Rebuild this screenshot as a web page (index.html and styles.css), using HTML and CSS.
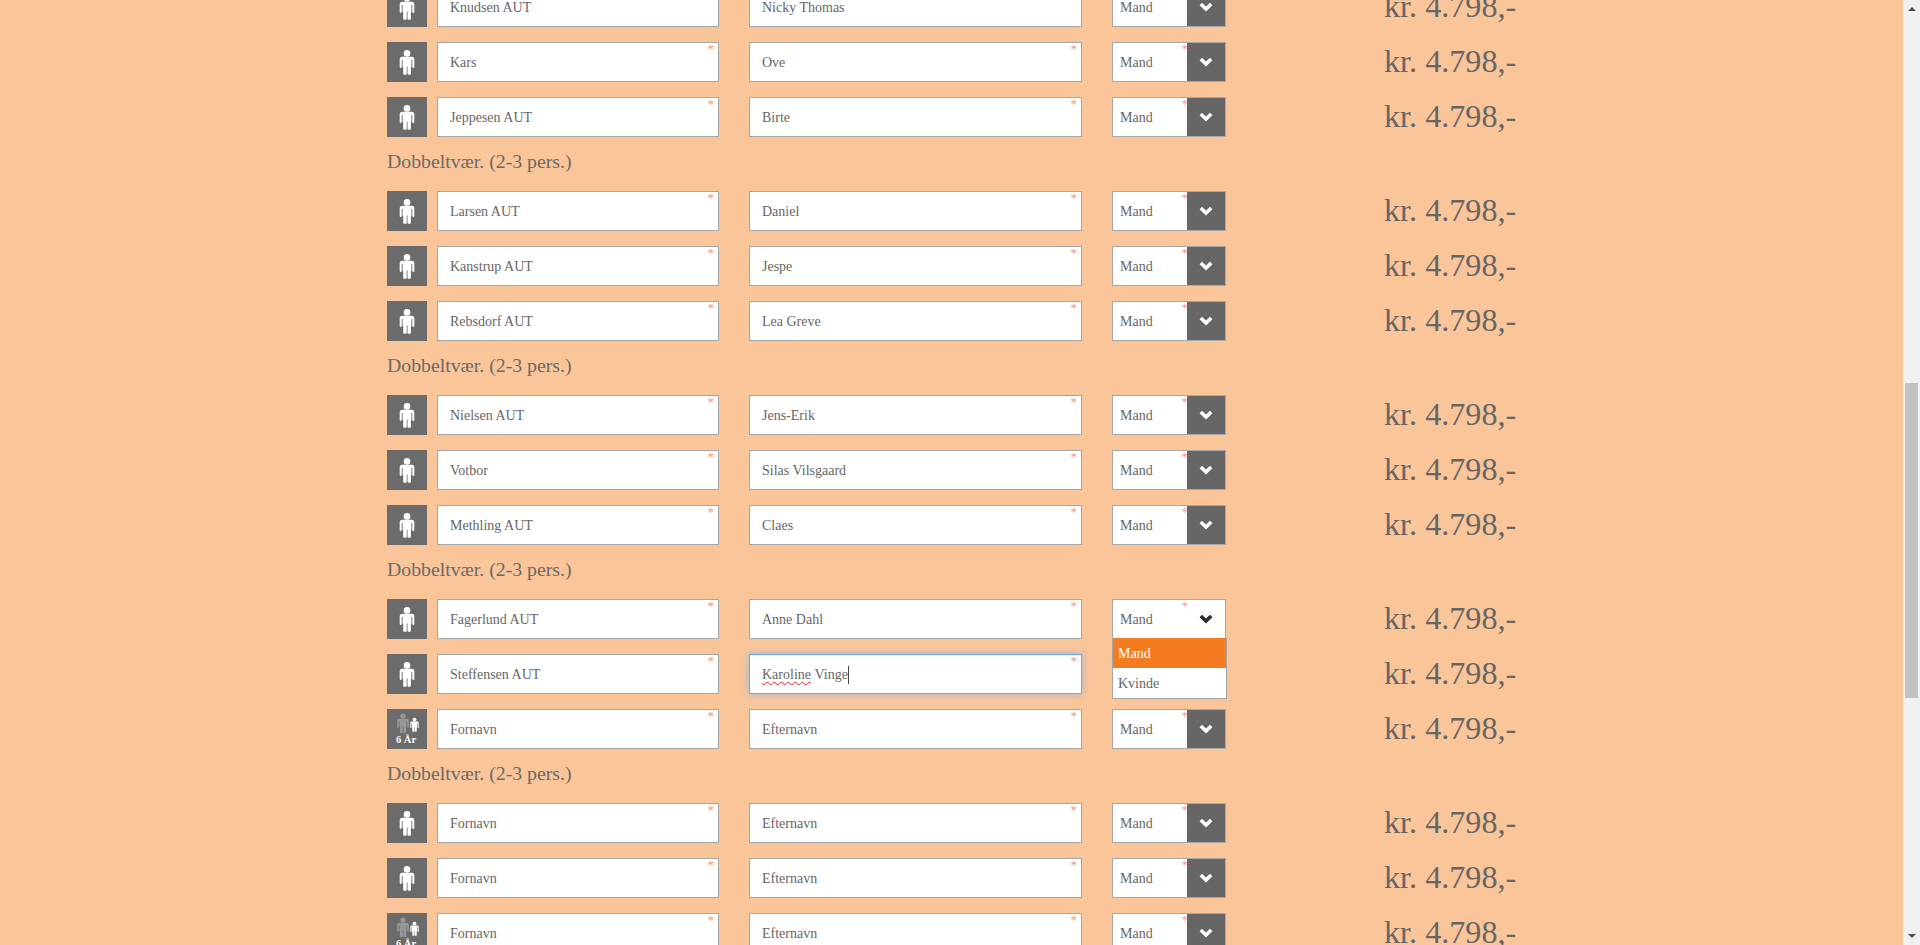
FILE: index.html
```html
<!DOCTYPE html>
<html lang="da">
<head>
<meta charset="utf-8">
<title>Dobbeltvær</title>
<link rel="stylesheet" href="styles.css">
</head>
<body>
<svg class="defs" width="0" height="0" aria-hidden="true">
  <symbol id="person" viewBox="0 0 40 40">
    <circle cx="20" cy="11.4" r="3.3"/>
    <path d="M15.2 14.7h9.6a2.5 2.5 0 0 1 2.5 2.5V25a1 1 0 0 1-2 0v-7h-.9V25h-.5v6.7a1 1 0 0 1-1 1h-1.4a1 1 0 0 1-1-1V24.5h-.8v7.2a1 1 0 0 1-1 1H17.2a1 1 0 0 1-1-1V25h-.6v-7h-.9v7a1 1 0 0 1-2 0v-7.8a2.5 2.5 0 0 1 2.5-2.5z"/>
  </symbol>
  <symbol id="chev" viewBox="0 0 14 10">
    <path d="M1.8 2l5.2 5 5.2-5" fill="none" stroke="currentColor" stroke-width="3.6"/>
  </symbol>
</svg>
<div class="shell">
<main class="page">
  <div class="list">

    <div class="row"><div class="badge"><svg class="ico"><use href="#person"/></svg></div><div class="field f1">Knudsen AUT<i>*</i></div><div class="field f2">Nicky Thomas<i>*</i></div><div class="sel">Mand<i>*</i><b><svg class="chev"><use href="#chev"/></svg></b></div><div class="price">kr. 4.798,-</div></div>
    <div class="row"><div class="badge"><svg class="ico"><use href="#person"/></svg></div><div class="field f1">Kars<i>*</i></div><div class="field f2">Ove<i>*</i></div><div class="sel">Mand<i>*</i><b><svg class="chev"><use href="#chev"/></svg></b></div><div class="price">kr. 4.798,-</div></div>
    <div class="row"><div class="badge"><svg class="ico"><use href="#person"/></svg></div><div class="field f1">Jeppesen AUT<i>*</i></div><div class="field f2">Birte<i>*</i></div><div class="sel">Mand<i>*</i><b><svg class="chev"><use href="#chev"/></svg></b></div><div class="price">kr. 4.798,-</div></div>

    <h3 class="room">Dobbeltvær. (2-3 pers.)</h3>
    <div class="row"><div class="badge"><svg class="ico"><use href="#person"/></svg></div><div class="field f1">Larsen AUT<i>*</i></div><div class="field f2">Daniel<i>*</i></div><div class="sel">Mand<i>*</i><b><svg class="chev"><use href="#chev"/></svg></b></div><div class="price">kr. 4.798,-</div></div>
    <div class="row"><div class="badge"><svg class="ico"><use href="#person"/></svg></div><div class="field f1">Kanstrup AUT<i>*</i></div><div class="field f2">Jespe<i>*</i></div><div class="sel">Mand<i>*</i><b><svg class="chev"><use href="#chev"/></svg></b></div><div class="price">kr. 4.798,-</div></div>
    <div class="row"><div class="badge"><svg class="ico"><use href="#person"/></svg></div><div class="field f1">Rebsdorf AUT<i>*</i></div><div class="field f2">Lea Greve<i>*</i></div><div class="sel">Mand<i>*</i><b><svg class="chev"><use href="#chev"/></svg></b></div><div class="price">kr. 4.798,-</div></div>

    <h3 class="room">Dobbeltvær. (2-3 pers.)</h3>
    <div class="row"><div class="badge"><svg class="ico"><use href="#person"/></svg></div><div class="field f1">Nielsen AUT<i>*</i></div><div class="field f2">Jens-Erik<i>*</i></div><div class="sel">Mand<i>*</i><b><svg class="chev"><use href="#chev"/></svg></b></div><div class="price">kr. 4.798,-</div></div>
    <div class="row"><div class="badge"><svg class="ico"><use href="#person"/></svg></div><div class="field f1">Votbor<i>*</i></div><div class="field f2">Silas Vilsgaard<i>*</i></div><div class="sel">Mand<i>*</i><b><svg class="chev"><use href="#chev"/></svg></b></div><div class="price">kr. 4.798,-</div></div>
    <div class="row"><div class="badge"><svg class="ico"><use href="#person"/></svg></div><div class="field f1">Methling AUT<i>*</i></div><div class="field f2">Claes<i>*</i></div><div class="sel">Mand<i>*</i><b><svg class="chev"><use href="#chev"/></svg></b></div><div class="price">kr. 4.798,-</div></div>

    <h3 class="room">Dobbeltvær. (2-3 pers.)</h3>
    <div class="row"><div class="badge"><svg class="ico"><use href="#person"/></svg></div><div class="field f1">Fagerlund AUT<i>*</i></div><div class="field f2">Anne Dahl<i>*</i></div>
      <div class="sel open">Mand<i>*</i><b><svg class="chev"><use href="#chev"/></svg></b>
        <ul class="menu"><li class="on">Mand</li><li>Kvinde</li></ul>
      </div><div class="price">kr. 4.798,-</div></div>
    <div class="row"><div class="badge"><svg class="ico"><use href="#person"/></svg></div><div class="field f1">Steffensen AUT<i>*</i></div><div class="field f2 focus"><span class="typo">Karoline</span>&nbsp;Vinge<span class="caret"></span><i>*</i></div><div class="sel">Mand<i>*</i><b><svg class="chev"><use href="#chev"/></svg></b></div><div class="price">kr. 4.798,-</div></div>
    <div class="row"><div class="badge kid"><svg class="ico-a"><use href="#person"/></svg><svg class="ico-c"><use href="#person"/></svg><span class="age">6 År</span></div><div class="field f1">Fornavn<i>*</i></div><div class="field f2">Efternavn<i>*</i></div><div class="sel">Mand<i>*</i><b><svg class="chev"><use href="#chev"/></svg></b></div><div class="price">kr. 4.798,-</div></div>

    <h3 class="room">Dobbeltvær. (2-3 pers.)</h3>
    <div class="row"><div class="badge"><svg class="ico"><use href="#person"/></svg></div><div class="field f1">Fornavn<i>*</i></div><div class="field f2">Efternavn<i>*</i></div><div class="sel">Mand<i>*</i><b><svg class="chev"><use href="#chev"/></svg></b></div><div class="price">kr. 4.798,-</div></div>
    <div class="row"><div class="badge"><svg class="ico"><use href="#person"/></svg></div><div class="field f1">Fornavn<i>*</i></div><div class="field f2">Efternavn<i>*</i></div><div class="sel">Mand<i>*</i><b><svg class="chev"><use href="#chev"/></svg></b></div><div class="price">kr. 4.798,-</div></div>
    <div class="row"><div class="badge kid"><svg class="ico-a"><use href="#person"/></svg><svg class="ico-c"><use href="#person"/></svg><span class="age">6 År</span></div><div class="field f1">Fornavn<i>*</i></div><div class="field f2">Efternavn<i>*</i></div><div class="sel">Mand<i>*</i><b><svg class="chev"><use href="#chev"/></svg></b></div><div class="price">kr. 4.798,-</div></div>

  </div>
</main>
<aside class="scrollbar" aria-hidden="true">
  <span class="arrow up"></span>
  <div class="track"><div class="thumb"></div></div>
  <span class="arrow down"></span>
</aside>
</div>
</body>
</html>
```

FILE: styles.css
```css
* { box-sizing: border-box; }
html, body { margin: 0; height: 100%; overflow: hidden; }
body { font-family: "Liberation Serif", "Times New Roman", serif; color: #666; }
.defs { position: absolute; }

.shell { display: flex; height: 945px; overflow: hidden; }
.page { flex: 1; background: #fbc59a; padding-left: 387px; overflow: hidden; }
.list { margin-top: -13px; width: 1100px; }

.row { display: flex; align-items: center; height: 40px; margin-bottom: 15px; }
.room { margin: 0 0 19px; height: 20px; font-size: 19.8px; line-height: 18px; font-weight: 400; color: #6a6a6a; }

.badge { position: relative; flex: none; width: 40px; height: 40px; background: #6b6b6b; }
.ico { display: block; width: 40px; height: 40px; fill: #fff; }
.ico-a { position: absolute; left: 0; top: -2px; width: 32px; height: 32px; fill: #969696; }
.ico-c { position: absolute; left: 16px; top: 4px; width: 23px; height: 23px; fill: #fff; }
.age { position: absolute; left: 1px; right: 3px; top: 24px; text-align: center; font-size: 10.5px; line-height: 14px; font-weight: 700; color: #fff; }

.field, .sel { position: relative; flex: none; height: 40px; border: 1px solid #a6a6a6; background: #fff; font-size: 14px; line-height: 40px; white-space: nowrap; }
.field { padding-left: 12px; }
.f1 { width: 282px; margin-left: 10px; }
.f2 { width: 333px; margin-left: 30px; }
.field i, .sel i { position: absolute; top: -1px; right: 4px; font-style: normal; font-size: 13px; line-height: 13px; color: #f6946a; }
.sel i { right: 37px; color: #f79a9a; }

.focus { border-color: #66afe9; box-shadow: inset 0 1px 1px rgba(0,0,0,.075), 0 0 8px rgba(102,175,233,.6); }
.typo { text-decoration: underline wavy #e3202a 1px; text-underline-offset: 2px; }
.caret { display: inline-block; width: 1px; height: 18px; background: #444; vertical-align: -5px; }

.sel { width: 114px; margin-left: 30px; padding-left: 7px; }
.sel b { position: absolute; top: 0; right: 0; bottom: 0; width: 38px; display: flex; align-items: center; justify-content: center; background: #666; color: #fff; }
.chev { display: block; width: 14px; height: 10px; }
.sel.open b { background: #fff; color: #2b2b2b; }

.menu { position: absolute; z-index: 2; left: -1px; top: 38px; width: 115px; margin: 0; padding: 0; list-style: none; background: #fff; border: 1px solid #a6a6a6; border-top: 0; line-height: 32px; }
.menu li { height: 30px; padding-left: 5px; }
.menu .on { background: #f47c20; color: #fff; }

.price { flex: none; margin-left: 158px; padding-bottom: 2px; font-size: 32.2px; line-height: 40px; color: #666; }

.scrollbar { flex: none; width: 17px; display: flex; flex-direction: column; align-items: center; background: #f1f1f1; }
.arrow { flex: none; width: 0; height: 0; border-left: 4px solid transparent; border-right: 4px solid transparent; }
.arrow.up { margin-top: 7px; border-bottom: 4px solid #505050; }
.arrow.down { margin-bottom: 7px; border-top: 4px solid #505050; }
.track { flex: 1; width: 100%; padding: 372px 2px 0; }
.thumb { height: 315px; background: #c1c1c1; }
```
